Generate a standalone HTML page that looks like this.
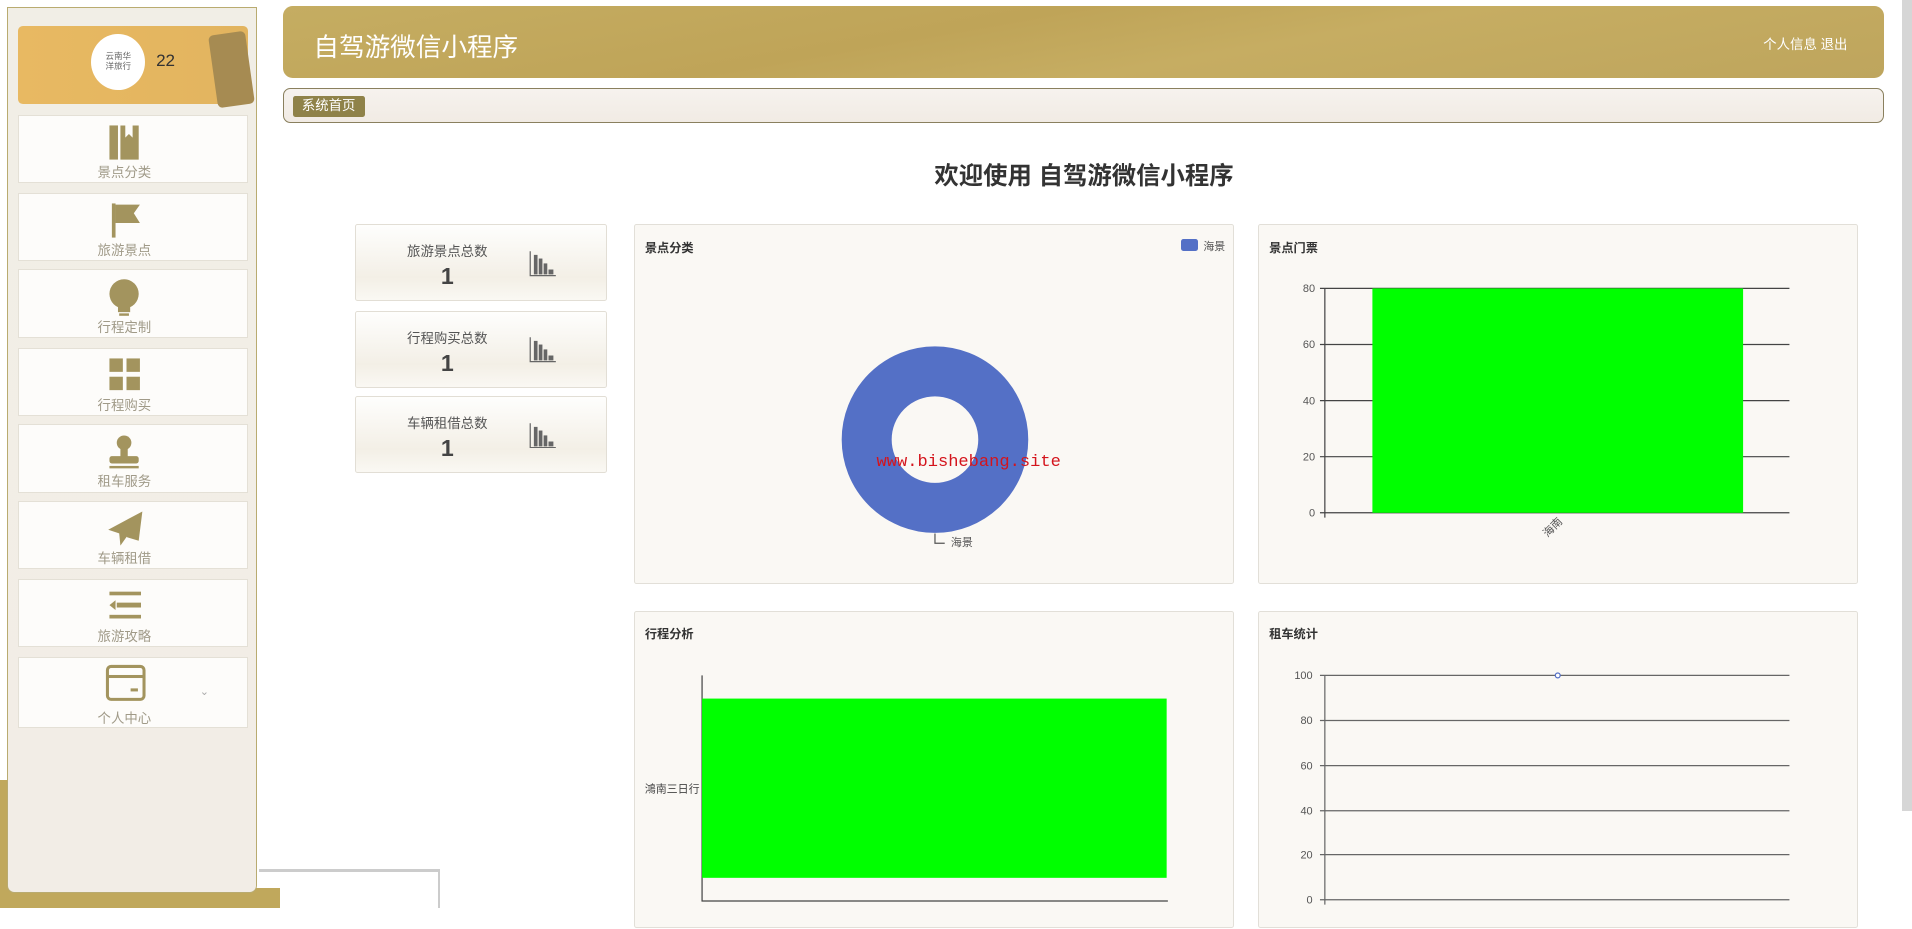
<!DOCTYPE html>
<html><head><meta charset="utf-8">
<style>
html{zoom:1.219388}
body{margin:0;width:1568px;height:745px;overflow:hidden;background:#fff;position:relative;font-family:"Liberation Sans","Noto Sans CJK SC",sans-serif}
.abs{position:absolute}
.side{left:6px;top:6px;width:205px;height:726px;background:linear-gradient(#f1eee6,#f2ede6);border:1px solid #b9ab70;border-radius:0 0 6px 6px;box-sizing:border-box}
.prof{left:15px;top:21px;width:188px;height:64px;background:linear-gradient(90deg,#e8b962,#e2b45f);border-radius:4px}
.item{left:15px;width:188px;height:56px;background:#fdfcfa;border:1px solid #e4e0d6;box-sizing:border-box;text-align:center}
.item span{position:absolute;left:0;right:14px;top:37px;font-size:11px;color:#a09a88}
.item svg{position:absolute;left:72px;top:6px}
.card{background:linear-gradient(#fefefd,#f3efe6 70%,#faf8f3);border:1px solid #e2ded5;border-radius:2px;box-sizing:border-box;left:291px;width:207px;height:63px}
.card .t{position:absolute;left:0;width:150px;top:12px;text-align:center;font-size:11px;color:#555}
.card .n{position:absolute;left:0;width:150px;top:31px;text-align:center;font-size:19px;font-weight:bold;color:#444}
.card svg{position:absolute;left:142px;top:20px}
.ch{background:#faf8f4;border:1px solid #e2dfd8;box-sizing:border-box;border-radius:2px}
.ch .h{position:absolute;left:8px;top:10px;font-size:10px;font-weight:bold;color:#333}
.lbl{position:absolute;font-size:9px;color:#555}
</style></head><body>
<div class="abs" style="left:0;top:640px;width:8px;height:105px;background:#c0a85c"></div>
<div class="abs" style="left:0;top:728px;width:230px;height:17px;background:#c0a85c"></div>
<div class="abs" style="left:212px;top:713px;width:148px;height:2px;background:#ccc"></div>
<div class="abs" style="left:359px;top:713px;width:2px;height:32px;background:#ccc"></div>
<div class="abs side"></div>
<div class="abs prof">
 <div class="abs" style="left:160px;top:6px;width:30px;height:60px;background:#a68b52;border-radius:4px;transform:rotate(-8deg)"></div>
 <div class="abs" style="left:60px;top:7px;width:44px;height:46px;border-radius:50%;background:#fff;font-size:7px;color:#666;text-align:center;line-height:8px;padding-top:15px;box-sizing:border-box">云南华<br>洋旅行</div>
 <div class="abs" style="left:113px;top:21px;font-size:14px;color:#333">22</div>
</div>
<div class="abs item" style="top:94px"><svg width="28" height="30"><rect x="2" y="2" width="7" height="28" fill="#a3945e"/><path d="M11 2h4v10l3-3 3 3V2h5v28H11z" fill="#a3945e"/></svg><span>景点分类</span></div>
<div class="abs item" style="top:158px"><svg width="28" height="30"><rect x="4" y="2" width="3" height="28" fill="#a3945e"/><path d="M7 3h20l-5 7 5 8H7z" fill="#a3945e"/></svg><span>旅游景点</span></div>
<div class="abs item" style="top:221px"><svg width="28" height="32"><ellipse cx="14" cy="13" rx="12" ry="12" fill="#a3945e"/><rect x="9" y="23" width="10" height="5" fill="#a3945e"/><rect x="10" y="29" width="8" height="2" fill="#a3945e"/></svg><span>行程定制</span></div>
<div class="abs item" style="top:285px"><svg width="28" height="30"><rect x="2" y="2" width="11" height="11" fill="#a3945e"/><rect x="16" y="2" width="11" height="11" fill="#a3945e"/><rect x="2" y="17" width="11" height="11" fill="#a3945e"/><rect x="16" y="17" width="11" height="11" fill="#a3945e"/></svg><span>行程购买</span></div>
<div class="abs item" style="top:348px"><svg width="28" height="32"><circle cx="14" cy="8" r="6" fill="#a3945e"/><rect x="11" y="12" width="6" height="8" fill="#a3945e"/><rect x="2" y="19" width="24" height="6" rx="2" fill="#a3945e"/><rect x="2" y="27" width="24" height="2" fill="#a3945e"/></svg><span>租车服务</span></div>
<div class="abs item" style="top:411px"><svg width="30" height="32"><path d="M29 2L1 17l9 3z M29 2L10 20l1 10 5-7z M29 2L16 23l10 3z" fill="#a3945e"/></svg><span>车辆租借</span></div>
<div class="abs item" style="top:475px"><svg width="28" height="30"><rect x="2" y="3" width="26" height="3" fill="#a3945e"/><rect x="8" y="12" width="20" height="4" fill="#a3945e"/><path d="M2 14l5-4v8z" fill="#a3945e"/><rect x="2" y="22" width="26" height="3" fill="#a3945e"/></svg><span>旅游攻略</span></div>
<div class="abs item" style="top:539px;height:58px"><svg width="34" height="34" style="left:70px;top:5px"><rect x="2" y="2" width="30" height="27" rx="3" fill="none" stroke="#a3945e" stroke-width="2.5"/><rect x="2" y="9" width="30" height="2.5" fill="#a3945e"/><rect x="21" y="20" width="6" height="2.5" fill="#a3945e"/></svg><span style="top:40px">个人中心</span><div class="abs" style="left:148px;top:22px;font-size:9px;color:#aaa">&#8964;</div></div>

<div class="abs" style="left:232px;top:5px;width:1313px;height:59px;border-radius:8px;background:linear-gradient(170deg,#c5ad62 0%,#bfa458 40%,#c6ad62 60%,#bea55d 100%)"></div>
<div class="abs" style="left:257px;top:22px;font-size:21px;color:#fff">自驾游微信小程序</div>
<div class="abs" style="left:1446px;top:27px;font-size:11px;color:#fff">个人信息 退出</div>
<div class="abs" style="left:232px;top:72px;width:1313px;height:29px;border:1px solid #8a805e;border-radius:6px;background:linear-gradient(#f6f2ee,#f1ebe4);box-sizing:border-box"></div>
<div class="abs" style="left:240px;top:79px;width:59px;height:17px;background:#8f8249;border-radius:2px;color:#fff;font-size:11px;line-height:17px;text-align:center">系统首页</div>
<div class="abs" style="left:1560px;top:0;width:8px;height:665px;background:#d6d6d6"></div>

<div class="abs" style="left:650px;width:478px;top:129px;text-align:center;font-size:20px;font-weight:bold;color:#333">欢迎使用 自驾游微信小程序</div>

<div class="abs card" style="top:184px"><div class="t">旅游景点总数</div><div class="n">1</div><svg width="22" height="22"><path d="M1 1v20h21" stroke="#666" fill="none"/><rect x="4" y="4" width="3" height="16" fill="#666"/><rect x="8" y="7" width="3" height="13" fill="#666"/><rect x="12" y="11" width="3" height="9" fill="#666"/><rect x="16" y="16" width="4" height="4" fill="#666"/></svg></div>
<div class="abs card" style="top:255px"><div class="t">行程购买总数</div><div class="n">1</div><svg width="22" height="22"><path d="M1 1v20h21" stroke="#666" fill="none"/><rect x="4" y="4" width="3" height="16" fill="#666"/><rect x="8" y="7" width="3" height="13" fill="#666"/><rect x="12" y="11" width="3" height="9" fill="#666"/><rect x="16" y="16" width="4" height="4" fill="#666"/></svg></div>
<div class="abs card" style="top:325px"><div class="t">车辆租借总数</div><div class="n">1</div><svg width="22" height="22"><path d="M1 1v20h21" stroke="#666" fill="none"/><rect x="4" y="4" width="3" height="16" fill="#666"/><rect x="8" y="7" width="3" height="13" fill="#666"/><rect x="12" y="11" width="3" height="9" fill="#666"/><rect x="16" y="16" width="4" height="4" fill="#666"/></svg></div>

<div class="abs ch" style="left:520px;top:184px;width:492px;height:295px"><div class="h">景点分类</div>
 <div class="abs" style="left:448px;top:11px;width:14px;height:10px;background:#5470c6;border-radius:2px"></div><div class="lbl" style="left:466px;top:10px">海景</div>
 <svg class="abs" style="left:0;top:0" width="492" height="295"><circle cx="246" cy="176" r="56" fill="none" stroke="#5470c6" stroke-width="41"/><path d="M246 253v8h8" stroke="#555" fill="none"/></svg>
 <div class="lbl" style="left:259px;top:253px">海景</div>
 <div class="abs" style="left:198px;top:187px;font-family:'Liberation Mono',monospace;font-size:14px;color:#d4141c">www.bishebang.site</div>
</div>

<div class="abs ch" style="left:1032px;top:184px;width:492px;height:295px"><div class="h">景点门票</div>
 <svg class="abs" style="left:0;top:0" width="492" height="295">
  <g stroke="#444" stroke-width="1"><path d="M50 52h385M50 98h385M50 144h385M50 190h385M50 236h385M54 52v188"/></g>
  <rect x="93" y="52" width="304" height="184" fill="#00ff00"/>
  <g font-size="9" fill="#555" text-anchor="end" font-family="Liberation Sans"><text x="46" y="55">80</text><text x="46" y="101">60</text><text x="46" y="147">40</text><text x="46" y="193">20</text><text x="46" y="239">0</text></g>
  <text x="243" y="250" font-size="9" fill="#555" transform="rotate(-45 243 250)" text-anchor="middle" font-family="Noto Sans CJK SC">海南</text>
 </svg></div>

<div class="abs ch" style="left:520px;top:501px;width:492px;height:260px"><div class="h">行程分析</div>
 <svg class="abs" style="left:0;top:0" width="492" height="260">
  <path d="M55 52v185h382" stroke="#444" fill="none"/>
  <rect x="55" y="71" width="381" height="147" fill="#00ff00"/>
  <text x="8" y="148" font-size="9" fill="#444" font-family="Noto Sans CJK SC">鴻南三日行</text>
 </svg></div>

<div class="abs ch" style="left:1032px;top:501px;width:492px;height:260px"><div class="h">租车统计</div>
 <svg class="abs" style="left:0;top:0" width="492" height="260">
  <g stroke="#666"><path d="M50 52h385M50 89h385M50 126h385M50 163h385M50 199h385M50 236h385M54 52v188"/></g>
  <circle cx="245" cy="52" r="2" fill="#fff" stroke="#5470c6"/>
  <g font-size="9" fill="#555" text-anchor="end" font-family="Liberation Sans"><text x="44" y="55">100</text><text x="44" y="92">80</text><text x="44" y="129">60</text><text x="44" y="166">40</text><text x="44" y="202">20</text><text x="44" y="239">0</text></g>
 </svg></div>
</body></html>
